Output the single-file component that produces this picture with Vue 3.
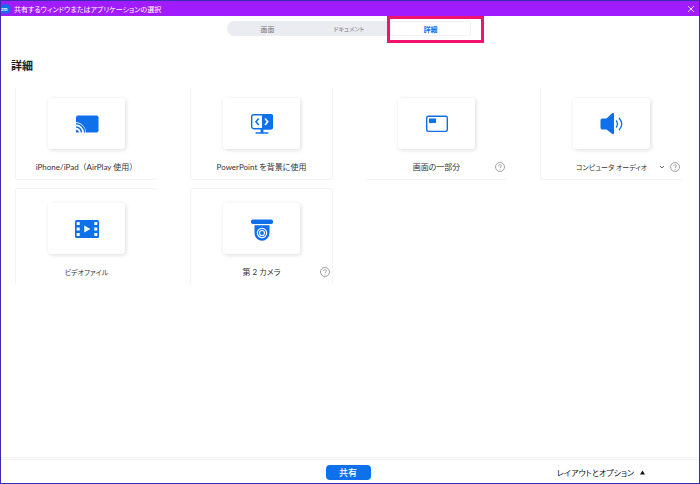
<script setup>
import { ref } from 'vue'

const tabs = [
  { label: '画面' },
  { label: 'ドキュメント', kana: true },
  { label: '詳細', marked: true },
]
const activeTab = ref(2)
const selected = ref('')
const optionsOpen = ref(false)

const sources = [
  { id: 'airplay', label: 'iPhone/iPad（AirPlay 使用）', wide: true, edges: 'edge-left edge-bottom' },
  { id: 'powerpoint', label: 'PowerPoint を背景に使用', edges: 'edge-left edge-right edge-bottom' },
  { id: 'portion', label: '画面の一部分', help: true, edges: 'edge-bottom' },
  { id: 'audio', label: 'コンピュータ オーディオ', kana: true, help: true, menu: true, edges: 'edge-left edge-bottom' },
  { id: 'video', label: 'ビデオファイル', kana: true, edges: 'edge-left edge-top' },
  { id: 'camera', label: '第 2 カメラ', help: true, edges: 'edge-left edge-right edge-top' },
]
</script>

<template>
  <div class="window">
    <header class="titlebar">
      <svg class="logo" viewBox="0 0 10 10" aria-hidden="true">
        <circle cx="4.500" cy="5" r="5" fill="#1070e8" />
        <text x="0" y="7" class="logo-text">zm</text>
      </svg>
      <h1 class="title">共有するウィンドウまたはアプリケーションの選択</h1>
      <button class="close" type="button" aria-label="閉じる">
        <svg viewBox="0 0 8 8" aria-hidden="true">
          <path d="M1 1l6 6M7 1l-6 6" fill="none" stroke="#f3dcff" />
        </svg>
      </button>
    </header>

    <nav class="tabs">
      <div v-for="(tab, i) in tabs" :key="tab.label" class="tab-slot">
        <button
          type="button"
          class="tab"
          :class="{ active: activeTab === i, 'tab-kana': tab.kana }"
          @click="activeTab = i"
        >{{ tab.label }}</button>
        <span v-if="tab.marked" class="marker"></span>
      </div>
    </nav>

    <main class="content">
      <h2 class="heading">詳細</h2>
      <div class="grid">
        <article
          v-for="(source, i) in sources"
          :key="source.id"
          class="card"
          :class="[source.edges, { lower: i > 3 }]"
        >
          <button
            type="button"
            class="thumb"
            :aria-labelledby="'label-' + source.id"
            @click="selected = source.id"
          >
            <svg v-if="source.id === 'airplay'" class="icon" viewBox="0 0 24 24" aria-hidden="true">
              <rect x="1" y="3.500" width="22.500" height="17" rx="2" fill="#0e71eb" />
              <path d="M0 10A11 11 0 0 1 11 21H0z" fill="#fff" />
              <path d="M1 11.800a8.700 8.700 0 0 1 8.700 8.700M1 15a5.500 5.500 0 0 1 5.500 5.500" fill="none" stroke="#0e71eb" stroke-width="1.500" />
              <path d="M1 17.700A2.800 2.800 0 0 1 3.800 20.500H1z" fill="#0e71eb" />
            </svg>
            <svg v-else-if="source.id === 'powerpoint'" class="icon" viewBox="0 0 24 24" aria-hidden="true">
              <rect x="1.700" y="2.700" width="20.600" height="14" rx="2" fill="#fff" stroke="#0e71eb" stroke-width="1.400" />
              <path d="M12 2h9a2 2 0 0 1 2 2v11.400a2 2 0 0 1-2 2h-9z" fill="#0e71eb" />
              <path d="M10.600 17h2.800v3.300h5v1.500H5.600v-1.500h5z" fill="#0e71eb" />
              <path d="M8.700 6.500L6 9.700l2.700 3.200" fill="none" stroke="#0e71eb" stroke-width="1.600" />
              <path d="M15 6.500l2.700 3.200L15 12.900" fill="none" stroke="#fff" stroke-width="1.600" />
            </svg>
            <svg v-else-if="source.id === 'portion'" class="icon" viewBox="0 0 24 24" aria-hidden="true">
              <rect x="1.700" y="4.200" width="20.600" height="15.200" rx="1.800" fill="none" stroke="#0e71eb" stroke-width="1.400" />
              <rect x="4" y="6.500" width="7" height="4.500" fill="#0e71eb" />
            </svg>
            <svg v-else-if="source.id === 'audio'" class="icon" viewBox="0 0 24 24" aria-hidden="true">
              <path d="M2 6.500h4.500L12 1.200Q14-.2 14 2v19q0 2.200-2 .8L6.500 17.500H2Q.5 17.500 .5 15.500v-7q0-2 1.500-2z" fill="#0e71eb" />
              <path d="M16 8.500q3 3.500 0 7M19 6q5.500 6 0 12" fill="none" stroke="#0e71eb" stroke-width="1.300" />
            </svg>
            <svg v-else-if="source.id === 'video'" class="icon" viewBox="0 0 24 24" aria-hidden="true">
              <rect x="0" y="3" width="24" height="18" rx="1.500" fill="#0e71eb" />
              <path d="M1.700 5h3v3h-3zM1.700 10.500h3v3h-3zM1.700 16h3v3h-3zM19.300 5h3v3h-3zM19.300 10.500h3v3h-3zM19.300 16h3v3h-3zM9.300 8.500v7l6-3.500z" fill="#fff" />
            </svg>
            <svg v-else class="icon" viewBox="0 0 24 24" aria-hidden="true">
              <rect x="1" y="2.500" width="22" height="4.500" rx="1.800" fill="#0e71eb" />
              <path d="M4.500 8.300h15v8a7.500 7.500 0 0 1-15 0z" fill="#0e71eb" />
              <circle cx="12" cy="16" r="4.600" fill="none" stroke="#fff" stroke-width="1.200" />
              <circle cx="12" cy="16" r="2.500" fill="none" stroke="#fff" stroke-width="1.200" />
            </svg>
          </button>
          <div class="caption">
            <span
              :id="'label-' + source.id"
              class="label"
              :class="{ kana: source.kana, wide: source.wide }"
            >{{ source.label }}</span>
            <span v-if="source.help" class="tools">
              <button v-if="source.menu" type="button" class="tool" aria-label="オーディオ設定">
                <svg class="chevron" viewBox="0 0 6 6" aria-hidden="true">
                  <path d="M1 2l2 2 2-2" fill="none" stroke="#666" />
                </svg>
              </button>
              <button type="button" class="tool" aria-label="ヘルプ">
                <svg class="help" viewBox="0 0 10 10" aria-hidden="true">
                  <circle cx="5" cy="5" r="4.500" fill="none" stroke="#8a8a8a" stroke-width=".8" />
                  <path d="M3.600 4.100C3.600 2.200 6.500 2.300 6.400 4 6.400 5 5 5 5 6.200M5 7v.8" fill="none" stroke="#8a8a8a" stroke-width=".8" />
                </svg>
              </button>
            </span>
          </div>
        </article>
      </div>
    </main>

    <footer class="footer">
      <button type="button" class="share">共有</button>
      <button type="button" class="options" @click="optionsOpen = !optionsOpen">
        レイアウトとオプション
        <svg class="caret" viewBox="0 0 5 5" aria-hidden="true">
          <path d="M2.500 .5L5 4.500H0z" fill="#111" />
        </svg>
      </button>
    </footer>
  </div>
</template>

<style>
body {
  margin: 0;
}
</style>

<style scoped>
.window {
  box-sizing: border-box;
  display: flex;
  flex-direction: column;
  min-height: 100vh;
  border: 1px solid #3a2db0;
  background: #fff;
  color: #333;
  font-family: Lato, "Noto Sans CJK JP", sans-serif;
  font-size: 8px;
  line-height: 12px;
  font-feature-settings: "palt";
}

button {
  margin: 0;
  padding: 0;
  border: 0;
  background: none;
  color: inherit;
  font: inherit;
  font-feature-settings: inherit;
  cursor: pointer;
}

svg {
  display: block;
}

.titlebar {
  display: flex;
  align-items: center;
  gap: 3px;
  height: 15px;
  padding-right: 4px;
  background: #a01cff;
  color: #fff;
}

.logo {
  width: 10px;
  height: 10px;
}

.logo-text {
  fill: #fff;
  font-size: 5px;
  font-weight: 700;
}

.title {
  flex: 1;
  margin: 0;
  font-size: 7px;
  font-weight: 400;
}

.close svg {
  width: 8px;
  height: 8px;
}

.tabs {
  display: flex;
  align-self: center;
  width: 35%;
  margin: 5px 2px 0 0;
  border-radius: 8px;
  background: #ebebf2;
}

.tab-slot {
  position: relative;
  flex: 1;
}

.tab {
  display: block;
  width: 100%;
  height: 15px;
  color: #777;
  font-size: 7px;
}

.tab-kana {
  font-size: 6px;
}

.tab.active {
  border: 1px solid #f1f1f4;
  border-radius: 2px;
  background: #fff;
  color: #0e71eb;
  font-weight: 700;
}

.marker {
  position: absolute;
  inset: -5px -13px -7px -3px;
  border: 3px solid #f0146c;
  pointer-events: none;
}

.content {
  flex: 1;
  padding: 22px 16px 22px 14px;
}

.heading {
  margin: 0 -4px 13px;
  color: #222;
  font-size: 11px;
  font-weight: 700;
  line-height: 16px;
}

.grid {
  display: grid;
  grid-template-columns: repeat(4, 1fr);
  gap: 8px 32px;
}

.card {
  display: flex;
  flex-direction: column;
  align-items: center;
  gap: 12px;
  padding: 10px 2px 6px;
  border: 1px solid transparent;
  border-radius: 3px;
}

.lower {
  padding-top: 14px;
}

.edge-left {
  border-left-color: #f3f3f5;
}

.edge-right {
  border-right-color: #f3f3f5;
}

.edge-top {
  border-top-color: #f1f2f3;
}

.edge-bottom {
  border-bottom-color: #f1f2f3;
}

.thumb {
  display: grid;
  place-items: center;
  width: 77px;
  height: 51px;
  border-radius: 3px;
  background: #fff;
  box-shadow: 1px 1px 4px rgba(0, 0, 0, 0.14);
}

.icon {
  width: 24px;
  height: 24px;
}

.caption {
  display: grid;
  grid-template-columns: 1fr auto 1fr;
  align-items: center;
  width: 100%;
}

.label {
  grid-column: 2;
  white-space: nowrap;
}

.kana {
  font-size: 7px;
}

.wide {
  font-feature-settings: normal;
}

.tools {
  display: flex;
  align-items: center;
  justify-content: flex-end;
  gap: 5px;
}

.help {
  width: 10px;
  height: 10px;
}

.chevron {
  width: 6px;
  height: 6px;
}

.footer {
  display: grid;
  grid-template-columns: 1fr auto 1fr;
  align-items: center;
  padding: 5px 54px 3px 50px;
  border-top: 3px double #f0f0f2;
}

.share {
  grid-column: 2;
  width: 45px;
  height: 15px;
  border-radius: 4px;
  background: #0e71eb;
  color: #fff;
  font-size: 9px;
  font-weight: 500;
}

.options {
  display: flex;
  align-items: center;
  justify-self: end;
  gap: 6px;
  color: #111;
  white-space: nowrap;
}

.caret {
  width: 5px;
  height: 5px;
}
</style>
